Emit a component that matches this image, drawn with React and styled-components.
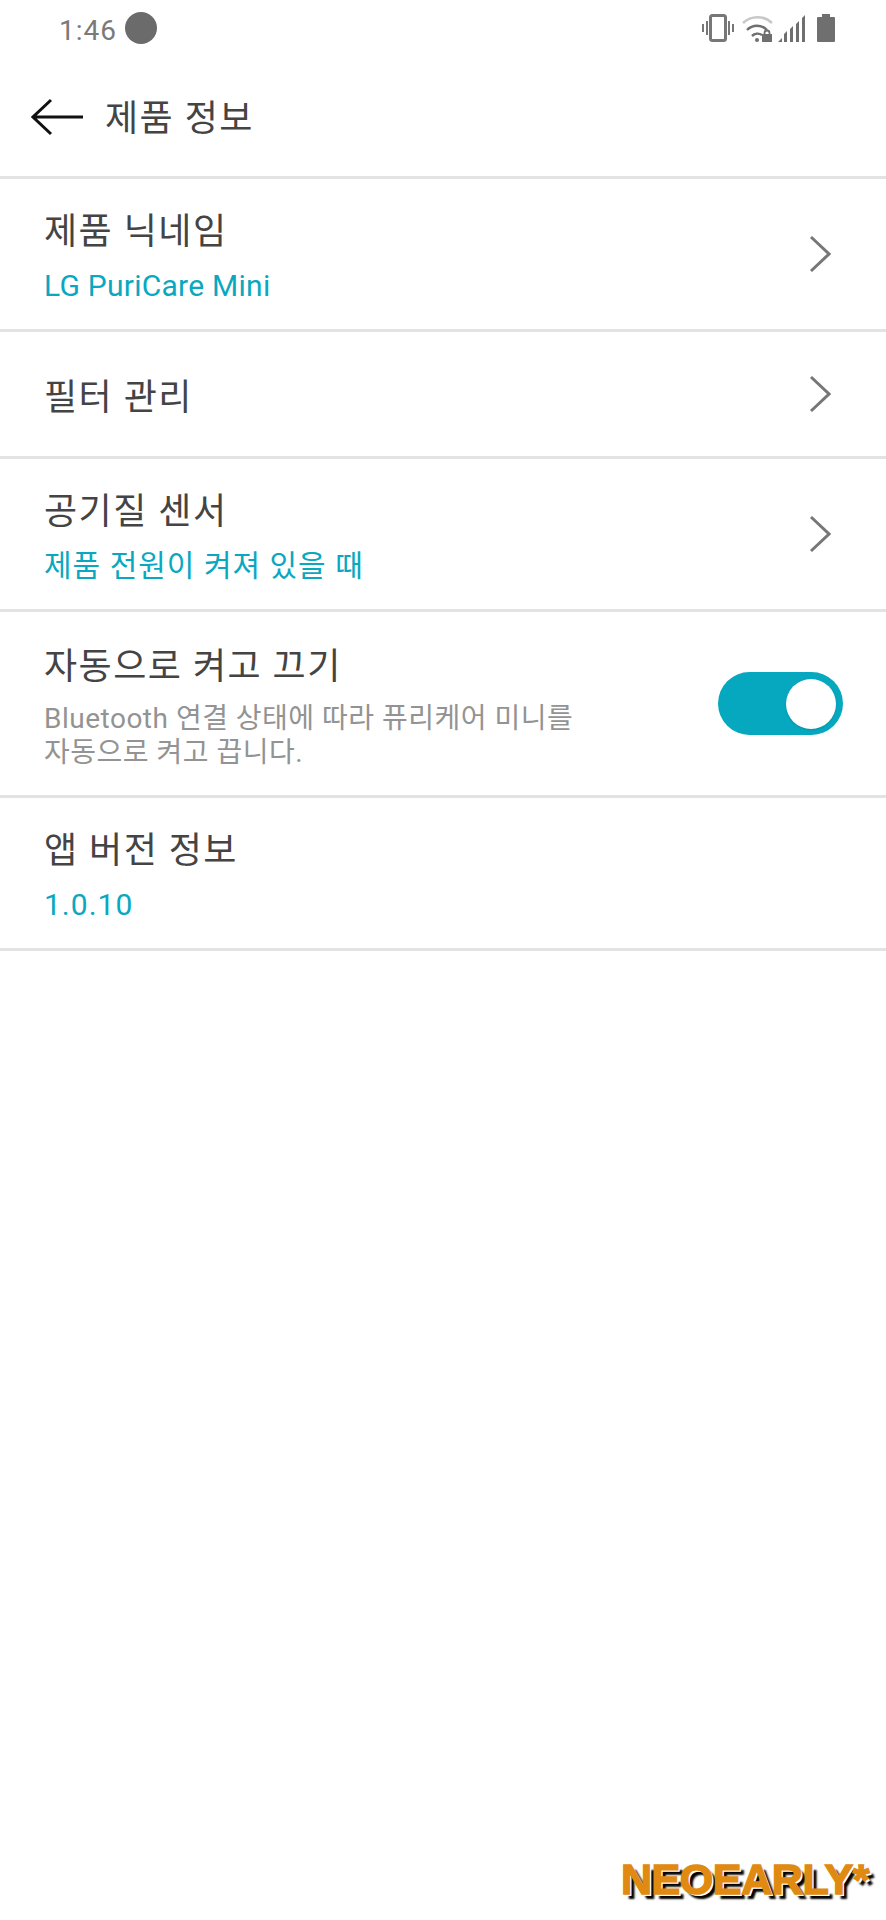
import React from 'react';
import styled, { createGlobalStyle } from 'styled-components';

const GlobalStyle = createGlobalStyle`
    html, body {
        margin: 0;
        padding: 0;
        background: #fff;
    }
    body {
        font-family: Roboto, "Noto Sans CJK KR", sans-serif;
    }
`;

const Screen = styled.div`
    position: relative;
    width: 886px;
    height: 1920px;
    overflow: hidden;
    background: #fff;
`;

const StatusBar = styled.div`
    height: 58px;
    display: flex;
    align-items: center;
    justify-content: space-between;
    padding: 0 51px 0 59px;
`;

const StatusLeft = styled.div`
    display: flex;
    align-items: center;
    gap: 8px;
`;

const Clock = styled.span`
    font-size: 28px;
    color: #7a7a7a;
    letter-spacing: 1px;
    padding-top: 3px;
`;

const RecordDot = styled.span`
    width: 32px;
    height: 32px;
    margin-bottom: 2px;
    border-radius: 50%;
    background: #6b6b6b;
`;

const StatusIcons = styled.div`
    display: flex;
    align-items: center;
    gap: 5px;
    padding-bottom: 2px;
`;

const Header = styled.header`
    height: 118px;
    display: flex;
    align-items: center;
    gap: 22px;
    padding: 0 0 0 31px;
`;

const Title = styled.h1`
    margin: 0;
    padding-top: 4px;
    font-size: 36px;
    font-weight: 400;
    line-height: 44px;
    letter-spacing: 1.5px;
    color: #444;
`;

const List = styled.div`
    border-top: 3px solid #e3e3e3;
`;

const Row = styled.div`
    height: ${({ $height }) => $height}px;
    display: flex;
    align-items: center;
    justify-content: space-between;
    padding: 0 ${({ $right }) => $right ?? 55}px 0 44px;
    border-bottom: 3px solid #e3e3e3;
`;

const RowText = styled.div`
    display: flex;
    flex-direction: column;
    padding-top: 5px;
`;

const RowTitle = styled.div`
    padding-top: 2px;
    font-size: 36px;
    line-height: 44px;
    letter-spacing: 1.5px;
    color: #444;
`;

const RowValue = styled.div`
    margin-top: 13px;
    font-size: 30px;
    line-height: 38px;
    letter-spacing: ${({ $spacing }) => $spacing}px;
    color: #0aa8c0;
`;

const RowHint = styled.div`
    margin-top: 13px;
    font-size: 28px;
    line-height: 34px;
    letter-spacing: 0.5px;
    color: #939393;
    white-space: pre-line;
`;

const Toggle = styled.div`
    width: 125px;
    height: 63px;
    border-radius: 32px;
    background: #06a8c0;
    display: flex;
    align-items: center;
    justify-content: flex-end;
    padding-right: 7px;
    box-sizing: border-box;
`;

const Knob = styled.div`
    width: 50px;
    height: 50px;
    border-radius: 50%;
    background: #fff;
    box-shadow: 0 1px 2px rgba(0, 0, 0, 0.15);
`;

const Watermark = styled.div`
    position: absolute;
    right: 17px;
    bottom: 23px;
    font-family: "Liberation Sans", sans-serif;
    font-size: 43px;
    line-height: 36px;
    font-weight: 700;
    color: #e08a12;
    letter-spacing: -0.4px;
    -webkit-text-stroke: 1.5px #e08a12;
    text-shadow: 2px 2px 0 #fff, 5px 5px 2px #000;
`;

const Chevron = () => (
    <svg width="22" height="38" viewBox="0 0 22 38" fill="none">
        <path d="M2 2l18 17L2 36" stroke="#777" strokeWidth="3" />
    </svg>
);

const BackArrow = () => (
    <svg width="52" height="38" viewBox="0 0 52 38" fill="none">
        <path d="M20 2L2 19l18 17M2 19h50" stroke="#111" strokeWidth="3" />
    </svg>
);

const VibrateIcon = styled(({ className }) => (
    <svg className={className} width="32" height="28" viewBox="0 0 32 28" fill="none" stroke="#777">
        <rect x="8.5" y="1.5" width="15" height="25" rx="2" strokeWidth="3" />
        <path d="M5 7v14M1 10v8M27 7v14M31 10v8" strokeWidth="2" />
    </svg>
))`
    margin-right: 3px;
`;

const WifiIcon = () => (
    <svg width="31" height="28" viewBox="0 0 31 28" fill="none">
        <path d="M1 9a21 21 0 0 1 29 0" stroke="#c8c8c8" strokeWidth="2.5" />
        <path d="M5 16a14 14 0 0 1 20 0" stroke="#6f6f6f" strokeWidth="2.5" />
        <path d="M10 22a8 8 0 0 1 10-1" stroke="#6f6f6f" strokeWidth="2.5" />
        <circle cx="15" cy="26" r="2" fill="#6f6f6f" />
        <rect x="20" y="20" width="10" height="8" fill="#6f6f6f" />
        <path d="M22.5 20v-1a2.5 2.5 0 0 1 5 0v1" stroke="#6f6f6f" strokeWidth="1.8" />
    </svg>
);

const SignalIcon = () => (
    <svg width="27" height="27" viewBox="0 0 27 27" fill="#6f6f6f">
        <path d="M0 27l4-4v4zM6 27v-8l3-3v11zM12 27V14l3-3v16zM18 27V9l3-3v21zM24 27V3l3-3v27z" />
    </svg>
);

const BatteryIcon = styled(({ className }) => (
    <svg className={className} width="18" height="28" viewBox="0 0 18 28" fill="#6f6f6f">
        <path d="M5 0h8v3h4a1 1 0 0 1 1 1v23a1 1 0 0 1-1 1H1a1 1 0 0 1-1-1V4a1 1 0 0 1 1-1h4z" />
    </svg>
))`
    margin-left: 7px;
`;

const App = () => (
    <Screen>
        <GlobalStyle />
        <StatusBar>
            <StatusLeft>
                <Clock>1:46</Clock>
                <RecordDot />
            </StatusLeft>
            <StatusIcons>
                <VibrateIcon />
                <WifiIcon />
                <SignalIcon />
                <BatteryIcon />
            </StatusIcons>
        </StatusBar>
        <Header>
            <BackArrow />
            <Title>제품 정보</Title>
        </Header>
        <List>
            <Row $height={150}>
                <RowText>
                    <RowTitle>제품 닉네임</RowTitle>
                    <RowValue $spacing={0.25}>LG PuriCare Mini</RowValue>
                </RowText>
                <Chevron />
            </Row>
            <Row $height={124}>
                <RowText>
                    <RowTitle>필터 관리</RowTitle>
                </RowText>
                <Chevron />
            </Row>
            <Row $height={150}>
                <RowText>
                    <RowTitle>공기질 센서</RowTitle>
                    <RowValue $spacing={1}>제품 전원이 켜져 있을 때</RowValue>
                </RowText>
                <Chevron />
            </Row>
            <Row $height={183} $right={43}>
                <RowText>
                    <RowTitle>자동으로 켜고 끄기</RowTitle>
                    <RowHint>{'Bluetooth 연결 상태에 따라 퓨리케어 미니를\n자동으로 켜고 끕니다.'}</RowHint>
                </RowText>
                <Toggle>
                    <Knob />
                </Toggle>
            </Row>
            <Row $height={150}>
                <RowText>
                    <RowTitle>앱 버전 정보</RowTitle>
                    <RowValue $spacing={1}>1.0.10</RowValue>
                </RowText>
            </Row>
        </List>
        <Watermark>NEOEARLY*</Watermark>
    </Screen>
);

export default App;
